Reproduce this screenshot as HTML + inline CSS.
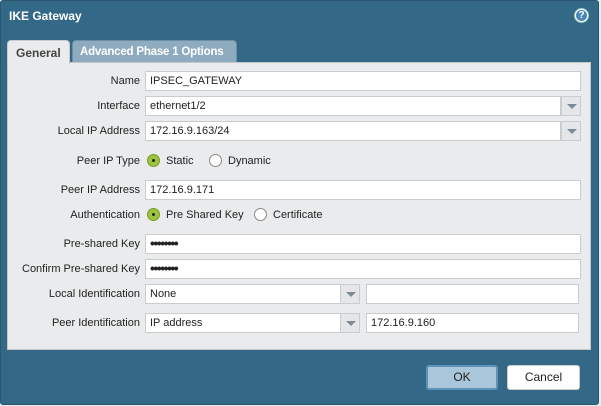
<!DOCTYPE html>
<html><head><style>
*{box-sizing:border-box;margin:0;padding:0}
body{width:601px;height:406px;background:#e8ecef;font-family:"Liberation Sans",sans-serif;font-size:11px;color:#222;position:relative;overflow:hidden}
.dlg{position:absolute;left:0;top:0;width:599px;height:405px;background:#336886;border:1px solid #2a5670;border-radius:3px}
.title{position:absolute;left:9px;top:9px;color:#fff;font-weight:bold;font-size:12px}
.help{position:absolute;left:574px;top:8px;width:15px;height:15px;border-radius:50%;background:#fff;border:1px solid #9cc;}
.help::after{content:"";position:absolute;left:1px;top:1px;width:11px;height:11px;border-radius:50%;background:#4a86b5}
.help span{position:absolute;left:0;top:0;width:13px;text-align:center;color:#fff;font-weight:bold;font-size:10px;line-height:13px;z-index:1}
.tab{position:absolute;top:40px;height:23px;border-radius:4px 4px 0 0;font-weight:bold;font-size:12px;padding:5px 8px 0;white-space:nowrap;overflow:hidden}
.t1{left:7px;width:63px;background:#e9ebec;color:#444;border:1px solid #c8ccd0;border-bottom:none;height:24px}
.t2{left:72px;width:165px;background:#8fabbf;color:#fff;border:1px solid #6e8ea5;font-size:11.5px;letter-spacing:-0.2px;padding-left:7px}
.panel{position:absolute;left:7px;top:62px;width:584px;height:288px;background:#e9ebec;border:1px solid #c3c7ca}
.lb{position:absolute;right:461px;text-align:right;white-space:nowrap}
.in{position:absolute;background:#fff;border:1px solid #c9cdd0;height:20px;padding:3px 4px;white-space:nowrap}
.pw{font-size:14px;line-height:12px;font-weight:bold;letter-spacing:-1.5px;padding-top:2px}
.dd{position:absolute;width:20px;height:20px;background:#e4e6e8;border:1px solid #c9cdd0}
.dd::after{content:"";position:absolute;left:5px;top:7px;border-left:5px solid transparent;border-right:5px solid transparent;border-top:5px solid #7b8b96}
.rd{position:absolute;width:13px;height:13px;border-radius:50%;border:1px solid #888;background:#fff}
.rd.on{background:#9bc33c;border-color:#7a9a2c}
.rd.on::after{content:"";position:absolute;left:4px;top:4px;width:3px;height:3px;border-radius:50%;background:#222}
.rt{position:absolute}
.btn{position:absolute;top:365px;height:25px;border-radius:3px;text-align:center;line-height:25px;font-size:12px}
</style></head><body>
<div class="dlg"></div>
<div class="title">IKE Gateway</div>
<div class="help"><span>?</span></div>
<div class="tab t2">Advanced Phase 1 Options</div>
<div class="panel"></div>
<div class="tab t1">General</div>

<div class="lb" style="top:75px">Name</div>
<div class="in" style="left:145px;top:71px;width:436px">IPSEC_GATEWAY</div>
<div class="lb" style="top:100px">Interface</div>
<div class="in" style="left:145px;top:96px;width:416px">ethernet1/2</div><div class="dd" style="left:561px;top:96px"></div>
<div class="lb" style="top:125px">Local IP Address</div>
<div class="in" style="left:145px;top:121px;width:416px">172.16.9.163/24</div><div class="dd" style="left:561px;top:121px"></div>

<div class="lb" style="top:155px">Peer IP Type</div>
<div class="rd on" style="left:147px;top:154px"></div><div class="rt" style="left:166px;top:155px">Static</div>
<div class="rd" style="left:209px;top:154px"></div><div class="rt" style="left:228px;top:155px">Dynamic</div>

<div class="lb" style="top:184px">Peer IP Address</div>
<div class="in" style="left:145px;top:180px;width:436px">172.16.9.171</div>

<div class="lb" style="top:209px">Authentication</div>
<div class="rd on" style="left:147px;top:208px"></div><div class="rt" style="left:166px;top:209px">Pre Shared Key</div>
<div class="rd" style="left:254px;top:208px"></div><div class="rt" style="left:273px;top:209px">Certificate</div>

<div class="lb" style="top:238px">Pre-shared Key</div>
<div class="in pw" style="left:145px;top:234px;width:436px">••••••••</div>
<div class="lb" style="top:263px">Confirm Pre-shared Key</div>
<div class="in pw" style="left:145px;top:259px;width:436px">••••••••</div>

<div class="lb" style="top:288px">Local Identification</div>
<div class="in" style="left:145px;top:284px;width:196px">None</div><div class="dd" style="left:340px;top:284px"></div>
<div class="in" style="left:366px;top:284px;width:213px"></div>
<div class="lb" style="top:317px">Peer Identification</div>
<div class="in" style="left:145px;top:313px;width:196px">IP address</div><div class="dd" style="left:340px;top:313px"></div>
<div class="in" style="left:366px;top:313px;width:213px">172.16.9.160</div>

<div class="btn" style="left:426px;width:72px;background:#a9c6da;border:2px solid #5d93b8;color:#222;line-height:21px">OK</div>
<div class="btn" style="left:507px;width:73px;background:#fff;border:1px solid #ccc;line-height:23px">Cancel</div>
</body></html>
